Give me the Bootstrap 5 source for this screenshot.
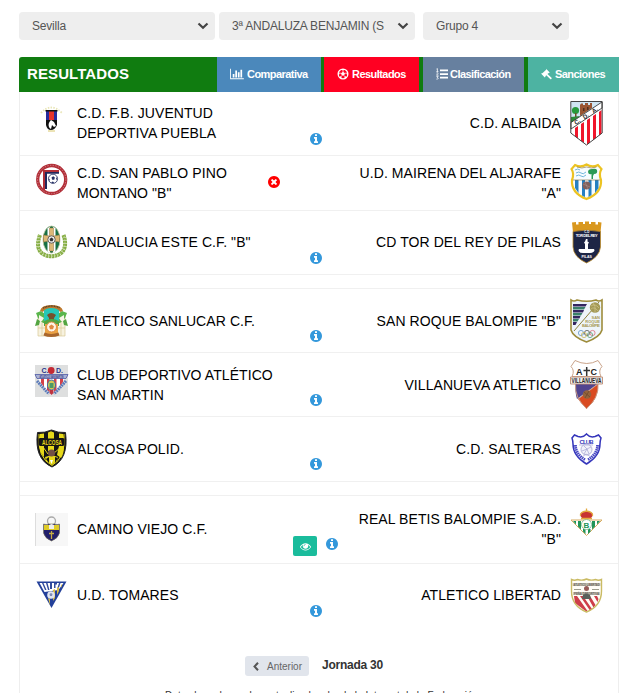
<!DOCTYPE html>
<html lang="es">
<head>
  <meta charset="UTF-8" />
  <meta name="viewport" content="width=device-width, initial-scale=1.0"/>
  <title>Resultados</title>
  <link href="https://cdn.jsdelivr.net/npm/bootstrap@5.3.2/dist/css/bootstrap.min.css" rel="stylesheet">
  <style>
    html, body { height: 100%; overflow: hidden; }
    body { font-family: "Liberation Sans", Arial, sans-serif; font-size: 14px; line-height: 20px; color: #000; }
    .page { width: 600px; height: 693px; margin-left: 19px; padding-top: 12px; overflow: hidden; }

    .filtro { width: 196px; height: 28px; padding: 1px 28px 0 13px; border: 0; border-radius: 4px; background-color: #eee; background-image: url("data:image/svg+xml,%3csvg xmlns='http://www.w3.org/2000/svg' viewBox='0 0 12 12'%3e%3cpath fill='none' stroke='%23444' stroke-width='2.2' d='M1.500 3.500 6 7.800l4.500-4.300'/%3e%3c/svg%3e"); background-size: 12px 12px; background-position: right 6px center; color: #555; font-size: 12px; letter-spacing: -.2px; line-height: 27px; }
    .filtro-grupo { width: 146px; margin-left: 8px; }

    .barra { height: 35px; margin-top: 17px; background: #107c10; border-radius: 3px 0 0 0; color: #fff; }
    .titulo { width: 198px; padding: 0 0 2px 8px; font-size: 15px; letter-spacing: .1px; font-weight: bold; }
    .pestana { gap: 3px; padding: 0 0 1px 13px; color: #fff; font-size: 11px; font-weight: bold; letter-spacing: -.55px; text-decoration: none; white-space: nowrap; }
    .p-comp { width: 104px; background: #4b88bb; margin-right: 3px; }
    .p-res { width: 95px; background: #ff0022; margin-right: 4px; }
    .p-clas { width: 101px; background: #67809f; margin-right: 4px; gap: 2px; }
    .p-san { width: 91px; background: #4db3a2; }

    .panel { height: 640px; border: solid #eee; border-width: 0 1px; }
    .partido { height: 64px; padding: 0 15px; border-bottom: 1px solid #f0f0f0; }
    .partido.bajo { height: 55px; }
    .partido.medio { height: 65px; }
    .partido.alto { height: 68px; }
    .partido.ultimo { border-bottom: 0; }
    .hueco { height: 14px; border-bottom: 1px solid #f0f0f0; }
    .escudo { width: 33px; height: 52px; margin-top: 2px; flex: none; overflow: visible; align-self: flex-start; }
    .escudo text { font-family: "Liberation Sans", Arial, sans-serif; font-weight: bold; }
    .local, .visita { flex: none; letter-spacing: .08px; }
    .local { width: 204px; margin-left: 9px; }
    .visita { width: 210px; margin-right: 9px; text-align: right; }
    .sube .local, .sube .visita { padding-bottom: 2px; }
    .centro { width: 70px; padding-bottom: 10px; flex: none; }
    .alto .centro { padding: 0 1px 7px 0; gap: 9px; }
    .info { width: 12px; height: 12px; fill: #3498db; }
    .alto .info { margin-bottom: 6px; }
    .medio .info { margin-bottom: 1px; }
    .ultimo .info { margin-bottom: 1px; }
    .aplazado { width: 12px; height: 12px; margin: -2px 0 0 -13px; fill: #f00; }
    .ver { width: 24px; height: 20px; padding: 0; background: #1abc9c; border-radius: 2px; }
    .ver svg { width: 11px; height: 11px; fill: #fff; }

    .paginas { margin-top: 28px; padding-left: 225px; gap: 13px; }
    .anterior { width: 64px; height: 20px; padding: 0 0 0 8px; gap: 8px; border: 0; border-radius: 3px; background: #e1e5ec; color: #666; font-size: 10px; line-height: 21px; white-space: nowrap; }
    .jornada { color: #333; font-size: 12px; font-weight: bold; letter-spacing: -.25px; line-height: 18px; }
    .nota { margin-top: 13px; padding-left: 145px; font-size: 10px; line-height: 14px; letter-spacing: .06px; color: #333; white-space: nowrap; }
  </style>
</head>
<body>

  <!-- iconos compartidos -->
  <svg width="0" height="0" class="position-absolute">
    <symbol id="i-info" viewBox="128 128 1536 1536"><path d="M1152 1376v-160q0-14-9-23t-23-9h-96v-512q0-14-9-23t-23-9h-320q-14 0-23 9t-9 23v160q0 14 9 23t23 9h96v320h-96q-14 0-23 9t-9 23v160q0 14 9 23t23 9h448q14 0 23-9t9-23zm-128-896v-160q0-14-9-23t-23-9h-192q-14 0-23 9t-9 23v160q0 14 9 23t23 9h192q14 0 23-9t9-23zm640 416q0 209-103 385.5t-279.5 279.5-385.5 103-385.5-103-279.5-279.5-103-385.5 103-385.5 279.5-279.5 385.5-103 385.5 103 279.5 279.5 103 385.5z"/></symbol>
  </svg>

  <div class="page">
    <!-- Filtros -->
    <form class="d-flex">
      <select class="form-select filtro me-1"><option>Sevilla</option></select>
      <select class="form-select filtro"><option>3ª ANDALUZA BENJAMIN (S</option></select>
      <select class="form-select filtro filtro-grupo"><option>Grupo 4</option></select>
    </form>

    <!-- Cabecera y pestañas -->
    <div class="barra d-flex">
      <div class="titulo d-flex align-items-center">RESULTADOS</div>
      <a class="pestana p-comp d-flex align-items-center" href="#">
        <svg width="14" height="12" viewBox="0 0 2048 1792" fill="#fff"><path d="M640 896v512h-256v-512h256zm384-512v1024h-256v-1024h256zm1024 1152v128h-2048v-1536h128v1408h1920zm-640-896v768h-256v-768h256zm384-384v1152h-256v-1152h256z"/></svg>
        Comparativa</a>
      <a class="pestana p-res d-flex align-items-center" href="#">
        <svg width="12" height="12" viewBox="0 0 12 12"><circle cx="6" cy="6" r="4.9" fill="none" stroke="#fff" stroke-width="1.2"/><path fill="#fff" d="M6 3.8l2 1.5-.8 2.3H4.8L4 5.3zM4 .9h4L6 2.6zM.8 4.5l1.8 1L1.4 8zM11.2 4.5l-1.8 1L10.6 8zM2.6 10l.7-2 2 2.6zM9.4 10l-.7-2-2 2.6z"/><path stroke="#fff" stroke-width=".7" d="M6 4V2M4 5.3L2 5M8 5.3l2-.3M5 7.5L3.6 9.3M7 7.5l1.4 1.8"/></svg>
        Resultados</a>
      <a class="pestana p-clas d-flex align-items-center" href="#">
        <svg width="12" height="12" viewBox="0 0 12 12" fill="#fff"><path d="M4 1.6h8v1.7H4zM4 5.2h8v1.7H4zM4 8.8h8v1.7H4z"/><path fill="none" stroke="#fff" stroke-width=".8" d="M.5 1l.9-.4v3M.4 3.6h2M.5 5c1.5-.8 2 .3 1 1.1l-1 1.1h2M.4 8.6h1.8L1.3 9.7c1.4 0 1.2 1.8-.9 1.4"/></svg>
        Clasificación</a>
      <a class="pestana p-san d-flex align-items-center" href="#">
        <svg width="11" height="12" viewBox="0 0 11 12" fill="#fff"><path d="M5.1.8l3.6 3.6-.8.8-.4-.3-1 1 4 3.9c.6.7-.6 2-1.3 1.3L5.3 7.200l-1 1 .3.4-.8.8L.2 5.800l.8-.8.4.3 4-3.700-.3-.4z"/></svg>
        Sanciones</a>
    </div>

    <!-- Partidos -->
    <div class="panel">
      <div class="partido sube d-flex align-items-center">
        <svg class="escudo" viewBox="0 0 33 52"><path d="M6 19Q16 8 27 19" fill="none" stroke="#e9e6b8" stroke-width="1.800" stroke-dasharray="1.500 1.300"/><path fill="#262b9b" d="M11 17h11v10H11z"/><path fill="#e5332a" d="M14 17h5v10h-5z"/><path fill="#111" d="M10.500 16h12v1.500h-12zM11 26h11v5q-2 5-6 5t-5-5z"/><path fill="#fff" d="M14.500 34q-2.500-4 1.500-8l3 2 2 4-2 1-2-2-1 4z"/><path d="M13 37h7" stroke="#d9c86c"/></svg>
        <div class="local">C.D. F.B. JUVENTUD DEPORTIVA PUEBLA</div>
        <div class="centro d-flex justify-content-center align-items-end align-self-stretch"><svg class="info"><use href="#i-info"/></svg></div>
        <div class="visita">C.D. ALBAIDA</div>
        <svg class="escudo" viewBox="0 0 33 52"><path fill="#fff" d="M.8 7.500h31.400V39L16.500 51 .8 39z"/><path fill="#cfe5f2" d="M1 8h31L1 29z"/><path fill="#9a5531" d="M10 20v-9l1-1.500h2V11h2V9h3v2h2V9h2v5L10 22z"/><path fill="#4e2f1e" d="M13 14h1.500v3H13zM17 13h1.500v3H17z"/><circle cx="5.500" cy="16.500" r="3.600" fill="#279a3c"/><path fill="#714b25" d="M5 19h1.500v5H5z"/><path fill="#2c8b38" d="M1 23l9-1-9 7z"/><path fill="#f0162b" d="M5 34l3-2v12.500l-3-2.300zM11 30l3-2V49l-3-2.200zM17 26l3-2V48.500l-3 2.200zM23 22l3-2V44l-3 2.300zM29 18l2.500-2V39.500L29 41.500z"/><path fill="#fff" stroke="#222" stroke-width=".8" d="M1 28.500L32 8v6L1 35z"/><g fill="#222" font-size="6"><text transform="translate(6 31) rotate(-34)">C.</text><text transform="translate(14.500 25.500) rotate(-34)">D.</text><text transform="translate(23.500 19.500) rotate(-34)">A.</text></g><path fill="none" stroke="#444" d="M.8 7.500h31.400V39L16.500 51 .8 39z"/></svg>
      </div>

      <div class="partido bajo d-flex align-items-center">
        <svg class="escudo" viewBox="0 0 33 52"><circle cx="16.700" cy="21.500" r="14" fill="#fff" stroke="#b22f38" stroke-width="3.300"/><circle cx="16.700" cy="21.500" r="14.200" fill="none" stroke="#d28b90" stroke-width="1" stroke-dasharray="1.200 1.500"/><path fill="#b22f38" d="M8 12h16v2H10v18H8z"/><path fill="#20275c" d="M10 14h14v1.800H12V31h-2z"/><circle cx="18" cy="20.800" r="4.600" fill="#fff" stroke="#38406f" stroke-width=".9"/><path fill="#253064" d="M16.500 19.500l1.700-1.200 1.700 1.200-.7 2.200h-2zM13.700 20l1.300 2-.8 1zM22 19l-1 1.500 1 2zM16 24.500l1.800-.9 1.500 1-1.500.7z"/></svg>
        <div class="local">C.D. SAN PABLO PINO MONTANO "B"</div>
        <div class="centro d-flex align-items-center align-self-stretch pb-0"><svg class="aplazado" viewBox="128 128 1536 1536"><path d="M1277 1122q0-26-19-45l-181-181 181-181q19-19 19-45 0-27-19-46l-90-90q-19-19-46-19-26 0-45 19l-181 181-181-181q-19-19-45-19-27 0-46 19l-90 90q-19 19-19 46 0 26 19 45l181 181-181 181q-19 19-19 45 0 27 19 46l90 90q19 19 46 19 26 0 45-19l181-181 181 181q19 19 45 19 27 0 46-19l90-90q19-19 19-46zm387-226q0 209-103 385.500t-279.500 279.500-385.500 103-385.500-103-279.500-279.500-103-385.500 103-385.500 279.500-279.500 385.500-103 385.500 103 279.500 279.500 103 385.500z"/></svg></div>
        <div class="visita">U.D. MAIRENA DEL ALJARAFE "A"</div>
        <svg class="escudo" viewBox="0 0 33 52"><path fill="#f7fcff" stroke="#ecc322" stroke-width="2.200" d="M5 7q6 3 11.500-.5Q22 10 28 7l3.500 4q-3 5-.5 11 1 13-14.500 19Q1 35 2 22q2.500-6-.5-11z"/><path fill="#247fc1" d="M5 22h3.500v13L5 30zM12 22h3v17l-3-1.500zM18.500 22h3v15l-3 2zM25 22h3.500v8L25 35z"/><path fill="none" stroke="#73b8dc" stroke-width="1" d="M6 15q3-2 5 0t5-1M6 18q3-2 5 0t5-1M5 12q3-2 5 0"/><path fill="#2c9a55" d="M18 14q0-3 4-3 4-1 5 1 1 4-3 4l-1 2v3h-1.500v-5q-3 1-3.500-2z"/><path fill="none" stroke="#806c39" stroke-width=".6" d="M3 22h27M7 9q5 2 9.500 0 5 2 10 0"/><circle cx="16.500" cy="27.500" r="4" fill="#80605b"/><path stroke="#a98e86" stroke-width=".6" d="M13 26l7 3M15 24l3 7"/></svg>
      </div>

      <div class="partido sube d-flex align-items-center">
        <svg class="escudo" viewBox="0 0 33 52"><path fill="none" stroke="#86ad45" stroke-width="4" stroke-dasharray="2.500 .5" d="M5 22Q0 36 8 41q8 4.500 17 0 8-6 3.500-19"/><path fill="none" stroke="#b2cd7c" stroke-width="1.300" stroke-dasharray="1 2" d="M4 22Q0 35 8 41q8 4.500 17 0 7-7 4-19"/><ellipse cx="16.500" cy="26.500" rx="8.500" ry="13.500" fill="#176f43" stroke="#b8c39b" stroke-width=".8"/><path fill="#fff" d="M12.500 15l2.500-1v26l-2.500-1zM18 14l2.500 1v24L18 40z"/><path fill="#ddb876" stroke="#977640" stroke-width=".5" d="M14.500 15h4v8l6-1v7l-6-1v10h-4V28l-6 1v-7l6 1z"/><circle cx="16.500" cy="26.500" r="3.700" fill="#f0efeb" stroke="#454545" stroke-width=".8"/><path fill="#333" d="M16.500 24.500l2 1.500-.8 2.200h-2.400l-.8-2.200z"/></svg>
        <div class="local">ANDALUCIA ESTE C.F. "B"</div>
        <div class="centro d-flex justify-content-center align-items-end align-self-stretch"><svg class="info"><use href="#i-info"/></svg></div>
        <div class="visita">CD TOR DEL REY DE PILAS</div>
        <svg class="escudo" viewBox="0 0 33 52"><path fill="#d9981f" d="M2 9.500l4-.5v2.500h2.500V9H13v2h2V8.500h4V11h2V9h4.500v2.500H28V9l3.500.5-1 10H3z"/><path fill="#1e2545" stroke="#bb8c2c" stroke-width=".8" d="M3 18.500q13.500-3 27.500 0V34q-1 10-14 16Q3.500 44 3 34z"/><g fill="#fff" text-anchor="middle"><text x="16.800" y="20" font-size="3">C.D</text><text x="16.700" y="24" font-size="4" textLength="22">TOR DEL REY</text><text x="16.700" y="45" font-size="3.500">PILAS</text><path d="M16 26h1.500v2.500l1.500 1-1 1.500v5h6q1 1 0 2.500-2 1.500-4 1.500h-7q-3 0-4-1.500-1-1.500 0-2.500h6v-5l-1-1.500 1-1z"/></g></svg>
      </div>

      <div class="hueco"></div>

      <div class="partido d-flex align-items-center">
        <svg class="escudo" viewBox="0 0 33 52"><path fill="#f7f2df" stroke="#d9c995" stroke-width=".7" d="M3 23h27v22H3zM3 29h27M3 37h27M7 23v22M26 23v22"/><path fill="#5bb64d" d="M1 22l5-2 4 3V20h13v3l4-3 5 2-2 5-5 5H8l-5-5z"/><path fill="#27c7b8" d="M9 17h15v14H9z"/><path fill="#f8f5e8" d="M4 24l5 3-2 3H4zM29 24l-5 3 2 3h3z"/><path fill="#bd792e" d="M5 20q1-6 11.500-6T28 20l-3 1q-2-4-8.500-4T8 21z"/><path d="M8 17q9-4 17 0" fill="none" stroke="#594027" stroke-width="1.500" stroke-dasharray="1 .6"/><path fill="#76502d" d="M12 24q4-4 9 0l-2 3h-5zM14 27h5v4h-5z"/><path fill="#53a542" d="M2 28l3 2-1 4-4 1zM31 28l-3 2 1 4 4 1zM9 30q8-4 15 0v5H9z"/><path fill="#eca343" d="M10 33h13v9q-6 5-13 0z"/><path d="M9 43q7 3 15 0" fill="none" stroke="#a9662c" stroke-width="3"/><circle cx="16.500" cy="36" r="5" fill="#fff5e6" stroke="#e18f45"/><path fill="#e18a42" d="M16.500 33.500l2.500 1.700-1 3h-3l-1-3z"/></svg>
        <div class="local">ATLETICO SANLUCAR C.F.</div>
        <div class="centro d-flex justify-content-center align-items-end align-self-stretch"><svg class="info"><use href="#i-info"/></svg></div>
        <div class="visita">SAN ROQUE BALOMPIE "B"</div>
        <svg class="escudo" viewBox="0 0 33 52"><path fill="#eef5fa" stroke="#9e8d3c" stroke-width="1.600" d="M1 9q3 2 6 0 10 2.500 19 0 3 2 6 0v30q-2 7-15.500 12Q3 46 1 39z"/><path fill="#33265f" d="M3 13h14l-1.500 2.500H3zM3 19h11l-1 2.500H3zM3 25h7.500l-1 2.500H3zM3 31h4l-1.500 3H3z"/><path fill="#3a806a" d="M3 16h12.500l-1.500 2.500H3zM3 22h9.500l-1.500 2.500H3zM3 28h6l-1.500 2.500H3z"/><path stroke="#8e823b" stroke-width="1" d="M4 40l25-29"/><circle cx="25" cy="16.500" r="5.200" fill="#a49a57"/><path fill="none" stroke="#d6cd94" stroke-width=".6" d="M21 15q4-3 8 2M21 18q3-3 7 2M23 12q3 3 2 9"/><g fill="#a99b56" font-size="4" text-anchor="end"><text x="30" y="28">SAN</text><text x="30" y="32">ROQUE</text><text x="30" y="36" textLength="18">BALOMPIE</text></g><g fill="none" stroke-width=".8"><circle cx="11" cy="42" r="2.600" stroke="#6296c4"/><circle cx="17" cy="42" r="2.600" stroke="#555"/><circle cx="22.500" cy="42" r="2.600" stroke="#dc6b78"/><circle cx="14" cy="44" r="2.600" stroke="#cdb557"/><circle cx="20" cy="44" r="2.600" stroke="#5aa078"/></g></svg>
      </div>

      <div class="partido d-flex align-items-center">
        <svg class="escudo" viewBox="0 0 33 52"><path fill="#dedfdf" d="M0 10h33v32H0z"/><g fill="#26358b" font-size="7"><text x="6.500" y="17.500">C.</text><text x="21" y="17.500">D.</text></g><circle cx="16.200" cy="15.500" r="3.400" fill="#c42a34"/><path fill="#fff" d="M3 23h27l-7 10-7 7-7-7z"/><path fill="#d44048" d="M6 23h3v9l-3-4zM12 23h2.500v14L12 35zM19 23h2.500v12L19 37zM25 23h3v4l-3 4z"/><path fill="#a9b2d5" stroke="#515ba3" stroke-width=".8" d="M0 19.500h33l-2 4H2z"/><text x="16.500" y="23" font-size="3.500" text-anchor="middle" textLength="24" lengthAdjust="spacingAndGlyphs" fill="#39418b">ATLETICO SAN MARTIN</text><path fill="none" stroke="#5979b9" stroke-width="3" stroke-dasharray="1.800 .7" d="M2 26l12 13M31 26L19 39"/><ellipse cx="16.500" cy="30" rx="4" ry="5" fill="#d8c754" stroke="#376eaa"/><path fill="#4c9a67" d="M14.500 28h4v5h-4z"/><path fill="#bf3540" d="M14.500 35h4v3l-2 2-2-2z"/></svg>
        <div class="local">CLUB DEPORTIVO ATLÉTICO SAN MARTIN</div>
        <div class="centro d-flex justify-content-center align-items-end align-self-stretch"><svg class="info"><use href="#i-info"/></svg></div>
        <div class="visita">VILLANUEVA ATLETICO</div>
        <svg class="escudo" viewBox="0 0 33 52"><path fill="#fff" stroke="#caa48b" d="M5 5.500q12 6 23 0l4 6q-4 4-1 10H2q3-6-1-10z"/><path fill="#514590" d="M5.500 29h22L7 44Q5 38 5.500 29z"/><path fill="#d94b21" d="M28 29q1 9-5 18l-6.500 7L8 44z"/><path fill="none" stroke="#c99a82" d="M5.500 29q-1 14 11 24.500Q29 43 28 29M8 44l20-15"/><circle cx="17" cy="39.500" r="4.200" fill="#95633d"/><path stroke="#634226" stroke-width=".6" d="M14 37l6 5M19 36l-4 7"/><path fill="#eee" stroke="#bd8c75" stroke-width=".9" d="M.5 22h32v7H.5z"/><g fill="#222"><text x="6" y="19.500" font-size="9">A</text><text x="20.500" y="19.500" font-size="9">C</text><text x="1.500" y="28" font-size="6.500" textLength="30" lengthAdjust="spacingAndGlyphs">VILLANUEVA</text></g><path stroke="#333" stroke-width="1.500" d="M16.700 12v9M13.500 15.500h6.500"/></svg>
      </div>

      <div class="partido medio d-flex align-items-center">
        <svg class="escudo" viewBox="0 0 33 52"><path fill="#151515" stroke="#222" d="M2.500 13.500Q10 14 16.500 11 23 14 30.500 13.500 34 40 17 48-1 40 2.500 13.500z"/><path fill="#e6d819" d="M5 15l4-.5V19H4zM13 13.500l3-1.200 3 1.200V20h-6zM24 14.500l4 .5 1 4h-5zM4 27h5v11l-3-4zM13 27h6v5h-6zM24 27h5q0 8-3 12l-4-3zM10 38l7-2 6 2-1 4-5 4-6-4z"/><path fill="none" stroke="#e6d819" d="M4 15Q2 39 17 46.500 31 39 29 15M8 28l5 7M26 28l-8 7"/><path fill="#151515" d="M3.500 19.500h26v7h-26zM11 40l3-2v6zM20 38l3 1-3 5z"/><text x="7" y="25.500" font-size="6.500" textLength="20" lengthAdjust="spacingAndGlyphs" fill="#e6d819">ALCOSA</text><circle cx="16.500" cy="34" r="3.600" fill="#725044"/><path fill="#fff" d="M15 41h3l-1.500 4z"/></svg>
        <div class="local">ALCOSA POLID.</div>
        <div class="centro d-flex justify-content-center align-items-end align-self-stretch"><svg class="info"><use href="#i-info"/></svg></div>
        <div class="visita">C.D. SALTERAS</div>
        <svg class="escudo" viewBox="0 0 33 52"><path fill="#fff" stroke="#3536bb" stroke-width="1.500" d="M16.500 15q3.500 4 8.500 2.500l3.500-1.500L31 19q-1 3-1 6Q30 37 16.500 45 3 37 3 25q0-3-1-6l2.500-3L8 17.500q5 1.500 8.500-2.500z"/><text x="16.500" y="25" text-anchor="middle" font-size="6" fill="#3536bb" textLength="14">CLUB</text><path fill="none" stroke="#4546c3" stroke-width="2.800" stroke-dasharray="1.500 .6" d="M5.500 26q0 9 10 15M27.500 26q0 9-10 15"/><circle cx="16.500" cy="30.500" r="5.500" fill="#f2f2fa" stroke="#9999cc" stroke-width=".7"/><path fill="none" stroke="#a4a4d3" stroke-width=".7" d="M14 27l3 3 4-2M12 32l5-2 2 5M14 35l3-5M12 38l4-3 5 3M9 26h14"/></svg>
      </div>

      <div class="hueco"></div>

      <div class="partido alto sube d-flex align-items-center">
        <svg class="escudo" viewBox="0 0 33 52"><path fill="#f7f7f7" d="M0 15h33v33H0z"/><path stroke="#ddd" d="M.5 15v33"/><circle cx="16.500" cy="23" r="4" fill="none" stroke="#aaa" stroke-width="1.300"/><path fill="#211f6b" stroke="#77724d" stroke-width=".6" d="M8.500 26q3 1 5 0h6q3 1 5 0v9q-1 5-8 8-7-3-8-8z"/><path fill="#dfcb27" d="M9 27h15v5H9z"/><path fill="#eee" d="M14 27l2.500-1 2.500 1v4h-5z"/><path stroke="#c5ac42" stroke-width="1.300" d="M16.500 33v8M14 35.500h5"/></svg>
        <div class="local">CAMINO VIEJO C.F.</div>
        <div class="centro d-flex justify-content-center align-items-end align-self-stretch">
          <button type="button" class="btn ver d-flex align-items-center justify-content-center border-0"><svg viewBox="0 0 1792 1792"><path d="M1664 960q-152-236-381-353 61 104 61 225 0 185-131.500 316.500t-316.500 131.500-316.500-131.500-131.500-316.500q0-121 61-225-229 117-381 353 133 205 333.500 326.500t434.500 121.500 434.500-121.500 333.500-326.500zm-720-384q0-20-14-34t-34-14q-125 0-214.500 89.500t-89.500 214.500q0 20 14 34t34 14 34-14 14-34q0-86 61-147t147-61q20 0 34-14t14-34zm848 384q0 34-20 69-140 230-376.500 368.500t-499.500 138.500-499.500-139-376.500-368q-20-35-20-69t20-69q140-229 376.500-368t499.500-139 499.500 139 376.500 368q20 35 20 69z"/></svg></button>
          <svg class="info"><use href="#i-info"/></svg>
        </div>
        <div class="visita">REAL BETIS BALOMPIE S.A.D. "B"</div>
        <svg class="escudo" viewBox="0 0 33 52"><path fill="#fff" stroke="#d6ac62" stroke-width="1" d="M1 22h31L16.500 37.500z"/><path fill="#209458" d="M3 23h3v3.500zM8 23h3v8.500l-3-3zM22 23h3v5.500l-3 3zM27 23h3l-3 3.500zM13 31h2.500v5L13 33.500zM18 31h2.500v2.500L18 36z"/><circle cx="16.500" cy="26.500" r="5" fill="#fff" stroke="#8cc29e"/><text x="16.500" y="29.500" font-size="8" text-anchor="middle" fill="#209458">B</text><path fill="#c73333" d="M10.500 18q-1-3 2-4 4-2 8 0 3 1 2 4l-1.500 2h-9z"/><path fill="none" stroke="#e5a93f" stroke-width="1.300" d="M11 20.500h11M10.500 18q-1-4 6-5 7 1 6 5M16.500 10.500V13"/></svg>
      </div>

      <div class="partido ultimo sube d-flex align-items-center">
        <svg class="escudo" viewBox="0 0 33 52"><path fill="#23409a" d="M1.500 15.500h30L16.500 42z"/><path fill="#fff" d="M4.500 17h24l-5 7-14 2z"/><path fill="#324c9d" d="M7 17h1.500l3 7H10zM11 17h1.500l2 7H13zM15 17h2v6h-2zM19 17h3v1.500h-1.500V22H19zM24 17h1.500l-2 6H22z"/><path fill="#d6bb48" d="M18 24l2-1v9l-2 3zM22 22l2-1v4l-2 4zM26 19l1.500-1-1.500 4zM13 32l2 1v6z"/><circle cx="16" cy="29" r="3.800" fill="#e0e4f0"/><path fill="#7d8ab6" d="M16 27l1.500 1-.5 2h-2l-.5-2z"/></svg>
        <div class="local">U.D. TOMARES</div>
        <div class="centro d-flex justify-content-center align-items-end align-self-stretch"><svg class="info"><use href="#i-info"/></svg></div>
        <div class="visita">ATLETICO LIBERTAD</div>
        <svg class="escudo" viewBox="0 0 33 52"><path fill="#fffdf7" d="M1.500 13.500q3 1.500 6 0 5 1.500 9-.5 4 2 9 .5 3 1.500 6 0V25q0 15-15 21Q1.500 40 1.500 25z"/><path fill="#ccc7b8" d="M2.500 17h28v3h-28zM3 26h27v3H3z"/><g fill="#66605a" text-anchor="middle"><text x="16.500" y="20" font-size="3.500" textLength="26" lengthAdjust="spacingAndGlyphs">ATLETICO LIBERTAD</text><text x="16.500" y="29" font-size="3.500" textLength="25" lengthAdjust="spacingAndGlyphs">PEÑA DEPORTIVA</text></g><path stroke="#9c9c8d" stroke-width="1" d="M4 23.500h7M22 23.500h7"/><circle cx="16.500" cy="22.500" r="2.500" fill="#985b57"/><path fill="#ce3e49" d="M4 30h3l10.500 15h-2L5 37zM10 30h3l9 13-2 1.500zM17 30h3l5.500 9-2 2.500zM24 30h3l1.500 3-1 3z"/><path fill="#59605b" d="M13 29q3.500-3 7 0l1 4h-9z"/><path fill="none" stroke="#cabb64" stroke-width="1.400" d="M1.500 13.500q3 1.500 6 0 5 1.500 9-.5 4 2 9 .5 3 1.500 6 0V25q0 15-15 21Q1.500 40 1.500 25z"/></svg>
      </div>

      <!-- Paginación -->
      <div class="paginas d-flex">
        <button type="button" class="anterior d-flex align-items-center">
          <svg width="6" height="9" viewBox="0 0 6 9" fill="none" stroke="#555" stroke-width="2"><path d="M5 .8L1.500 4.500 5 8.200"/></svg><span>Anterior</span>
        </button>
        <span class="jornada">Jornada 30</span>
      </div>
      <div class="nota">Datos basados en los actualizados desde la Internet de la Federación.</div>
    </div>
  </div>

  <script src="https://cdn.jsdelivr.net/npm/bootstrap@5.3.2/dist/js/bootstrap.bundle.min.js"></script>
</body>
</html>
